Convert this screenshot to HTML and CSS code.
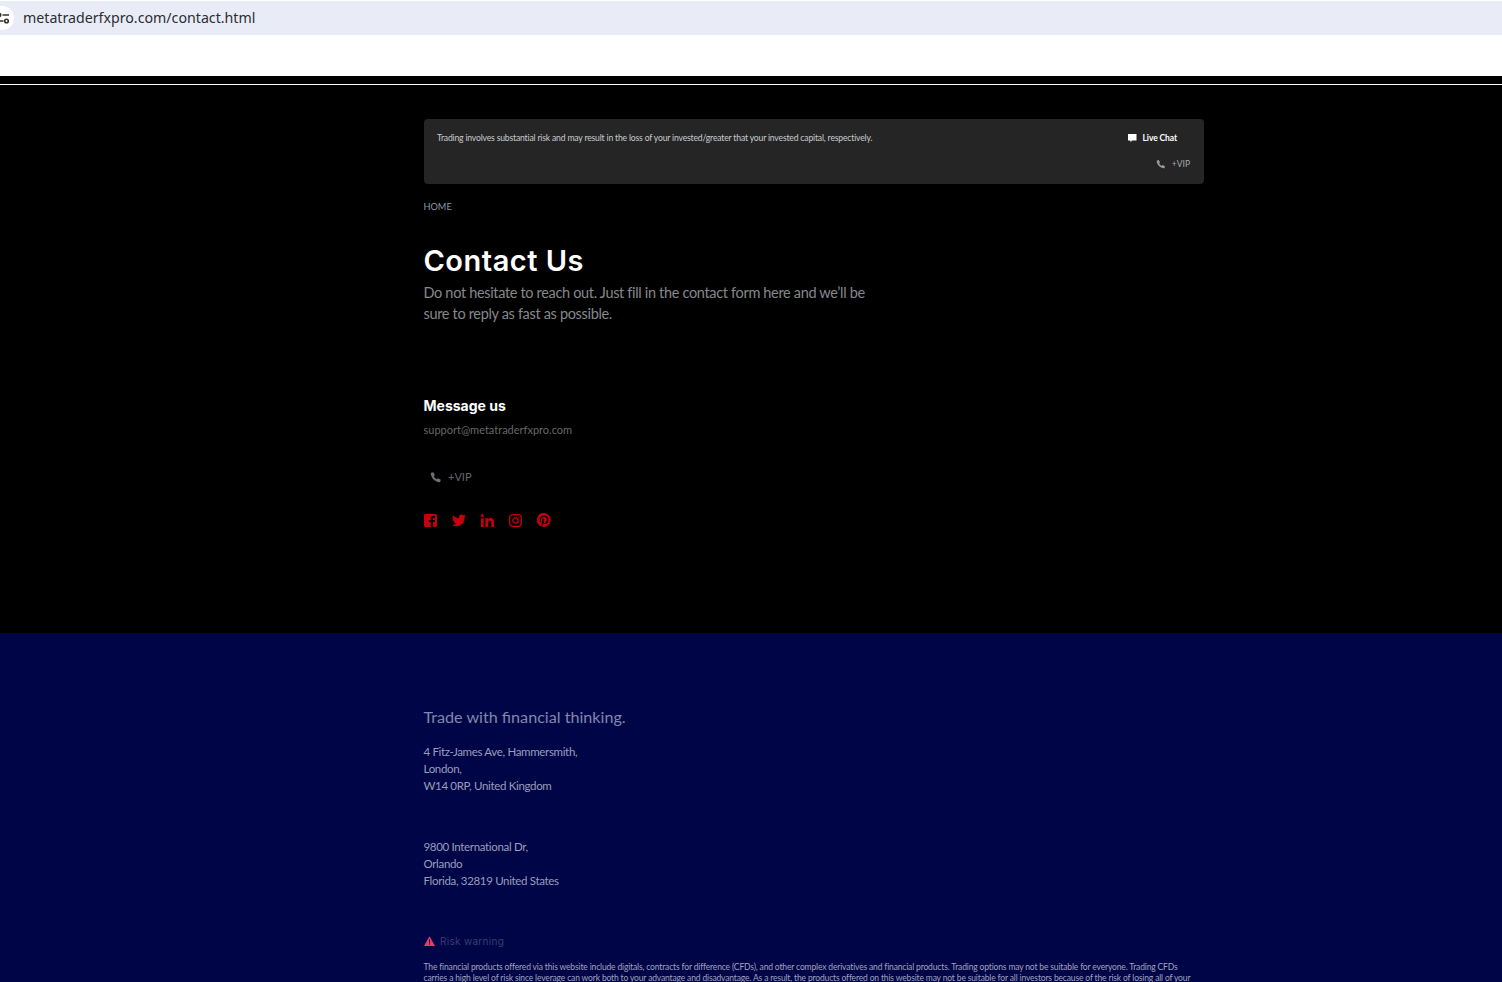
FILE: index.html
```html
<!DOCTYPE html>
<html lang="en">
<head>
<meta charset="utf-8">
<title>Contact Us</title>
<link rel="stylesheet" href="styles.css">
</head>
<body>
<div class="urlbar">
  <span class="site-info">
    <svg width="14" height="14" viewBox="0 0 14 14" class="tune"><circle cx="3" cy="4" r="1.8" fill="#333" stroke="#333" stroke-width="1.4"/><path d="M6.5 4H13M1 10h6.5" stroke="#333" stroke-width="1.7" fill="none"/><circle cx="10.500" cy="10" r="1.800" fill="none" stroke="#333" stroke-width="1.6"/></svg>
  </span>
  <span class="url">metatraderfxpro.com/contact.html</span>
</div>
<div class="whitebar"></div>
<header class="topstrip"></header>
<main class="main">
  <div class="wrap">
    <section class="notice">
      <p class="notice-text">Trading involves substantial risk and may result in the loss of your invested/greater that your invested capital, respectively.</p>
      <div class="notice-links">
        <a class="chat"><svg width="10" height="10" viewBox="0 0 10 10"><path d="M1 1h8.500v6.500H5L3.500 9.200V7.500H1z" fill="#fff"/></svg>Live Chat</a>
        <a class="vip-small"><svg width="10" height="10" viewBox="0 0 24 24"><path d="M6.600 2.500l3 5.500-2 2.500c1.200 2.600 3.300 4.700 5.900 5.900l2.500-2 5.500 3-1 4c-.2.700-.8 1.100-1.500 1C9.800 21.500 2.500 14.200 1.600 5c0-.7.300-1.300 1-1.500z" fill="#9a9a9a"/></svg>+VIP</a>
      </div>
    </section>
    <nav class="crumb">HOME</nav>
    <h1 class="title">Contact Us</h1>
    <p class="lead">Do not hesitate to reach out. Just fill in the contact form here and we’ll be sure to reply as fast as possible.</p>
    <h2 class="msg">Message us</h2>
    <p class="mail">support@metatraderfxpro.com</p>
    <p class="vip"><svg width="12" height="12" viewBox="0 0 24 24"><path d="M6.600 2.500l3 5.500-2 2.500c1.200 2.600 3.300 4.700 5.900 5.900l2.500-2 5.500 3-1 4c-.2.700-.8 1.100-1.500 1C9.800 21.500 2.500 14.200 1.600 5c0-.7.300-1.300 1-1.500z" fill="#6e7276"/></svg>+VIP</p>
    <div class="social">
      <svg width="13" height="13" viewBox="0 0 14 14"><path d="M1.500 0h11A1.500 1.500 0 0 1 14 1.500v11a1.500 1.500 0 0 1-1.500 1.500H9.700V8.700h2l.3-2.300H9.700V5.100c0-.7.300-1.100 1.100-1.100H12V2c-.4-.1-1-.1-1.600-.1-1.900 0-3.100 1.100-3.100 3v1.500H5.300v2.300h2V14H1.500A1.500 1.500 0 0 1 0 12.500v-11A1.500 1.500 0 0 1 1.500 0z" fill="#c4000c"/></svg>
      <svg width="14" height="13" viewBox="0 0 24 22"><path d="M24 3.100c-.9.400-1.800.7-2.800.8 1-.6 1.800-1.600 2.200-2.700-1 .6-2 1-3.100 1.200A4.900 4.900 0 0 0 11.900 7C7.800 6.800 4.200 4.800 1.700 1.900.4 4.100 1 7 3.200 8.400c-.8 0-1.600-.2-2.200-.6 0 2.300 1.600 4.400 3.900 4.900-.7.200-1.500.2-2.200.1.600 2 2.400 3.400 4.600 3.400A9.900 9.900 0 0 1 0 18.700 14 14 0 0 0 21.500 6.200c1-.7 1.900-1.700 2.500-3.100z" fill="#c4000c"/></svg>
      <svg width="13" height="13" viewBox="0 0 14 14"><path d="M0 4.600h2.900V14H0zM1.450 0a1.650 1.650 0 1 1 0 3.300 1.650 1.650 0 0 1 0-3.300zM4.700 4.600h2.800v1.300c.4-.8 1.400-1.500 2.800-1.500 3 0 3.700 1.900 3.700 4.500V14h-2.900V9.400c0-1.100 0-2.500-1.500-2.500s-1.800 1.200-1.800 2.400V14H4.700z" fill="#c4000c"/></svg>
      <svg width="13" height="13" viewBox="0 0 14 14" fill="none" stroke="#c4000c"><rect x=".7" y=".7" width="12.600" height="12.600" rx="3.500" stroke-width="1.400"/><circle cx="7" cy="7" r="2.900" stroke-width="1.400"/><circle cx="10.600" cy="3.400" r=".8" fill="#c4000c" stroke="none"/></svg>
      <svg width="14" height="14" viewBox="0 0 24 24"><path d="M12 0a12 12 0 0 0-4.400 23.200c-.1-1-.2-2.400 0-3.400l1.400-6s-.4-.7-.4-1.800c0-1.700 1-2.900 2.200-2.900 1 0 1.500.8 1.500 1.700 0 1-.7 2.600-1 4-.3 1.200.6 2.200 1.800 2.200 2.100 0 3.800-2.300 3.800-5.500 0-2.900-2.100-4.900-5-4.900-3.400 0-5.400 2.500-5.400 5.200 0 1 .4 2.100.9 2.700.1.100.1.200.1.300l-.3 1.400c-.1.200-.2.300-.4.200-1.500-.7-2.400-2.900-2.400-4.700 0-3.800 2.800-7.300 8-7.300 4.200 0 7.500 3 7.500 7 0 4.200-2.600 7.500-6.300 7.500-1.200 0-2.400-.6-2.800-1.400l-.8 2.900c-.3 1.100-1 2.400-1.500 3.200A12 12 0 1 0 12 0z" fill="#c4000c"/></svg>
    </div>
  </div>
</main>
<footer class="footer">
  <div class="wrap">
    <p class="tag">Trade with financial thinking.</p>
    <address class="addr first">4 Fitz-James Ave, Hammersmith,<br>London,<br>W14 0RP, United Kingdom</address>
    <address class="addr second">9800 International Dr,<br>Orlando<br>Florida, 32819 United States</address>
    <p class="risk"><svg width="11" height="10" viewBox="0 0 11 10"><path d="M5.500 0.300L11 10H0z" fill="#ea3a68"/><path d="M5 3.500h1v3.300H5zM5 7.600h1v1H5z" fill="#000548"/></svg>Risk warning</p>
    <p class="legal">The financial products offered via this website include digitals, contracts for difference (CFDs), and other complex derivatives and financial products. Trading options may not be suitable for everyone. Trading CFDs carries a high level of risk since leverage can work both to your advantage and disadvantage. As a result, the products offered on this website may not be suitable for all investors because of the risk of losing all of your invested capital.</p>
  </div>
</footer>
</body>
</html>
```
FILE: styles.css
```css
* { box-sizing: border-box; }
html, body { margin: 0; height: 982px; overflow: hidden; background: #fff; }
body { font-family: Lato, "Open Sans", sans-serif; }
p, h1, h2, address { margin: 0; font-style: normal; }
svg { display: block; flex: none; }

.urlbar { height: 34px; margin-top: 1px; background: #e9ecf6; display: flex; align-items: center; }
.site-info { width: 14px; height: 24px; border-radius: 0 12px 12px 0; background: #fff; display: flex; align-items: center; justify-content: flex-end; padding-right: 4px; flex: none; overflow: hidden; }
.url { margin-left: 9px; font: 14.200px/1 "Noto Sans", "Open Sans", sans-serif; color: #2b2d33; }
.whitebar { height: 41px; background: #fff; }
.topstrip { height: 9px; background: #000; border-bottom: 1px solid #fff; }

.wrap { width: 780px; margin-left: 424px; }
.main { height: 548px; background: #000; padding-top: 34px; }
.notice { height: 65px; background: #252525; border-radius: 4px; padding: 12px 14px 0 13px; display: flex; justify-content: space-between; }
.notice-text { font-size: 8.600px; line-height: 14px; color: #c8ccd0; letter-spacing: -.17px; }
.notice-links { display: flex; flex-direction: column; align-items: flex-end; gap: 12px; font-size: 8.500px; line-height: 14px; }
.chat { display: flex; align-items: center; gap: 6px; color: #fff; font-weight: 700; margin-right: 13px; letter-spacing: -.1px; }
.vip-small { display: flex; align-items: center; gap: 6px; color: #a8aaac; }
.crumb { margin: 16px 0 0 -.5px; font-size: 9.200px; line-height: 14px; color: #8d99a6; }
.title { margin: 28px 0 0 -.5px; font: 600 29px/38px Inter, sans-serif; letter-spacing: .5px; color: #fff; }
.lead { margin: 2px 0 0 -.5px; width: 460px; font-size: 14.500px; line-height: 21px; letter-spacing: -.33px; color: #85888c; }
.msg { margin: 72px 0 0 -.5px; font: 700 14px/20px Inter, sans-serif; color: #fff; }
.mail { margin: 6px 0 0 -.5px; font-size: 11px; line-height: 16px; color: #66686a; }
.vip { margin: 31px 0 0 6px; display: flex; align-items: center; gap: 6px; font-size: 11px; line-height: 16px; color: #66686a; }
.social { margin-top: 28px; display: flex; align-items: center; gap: 15px; }

.footer { height: 349px; background: #000548; padding-top: 74px; overflow: hidden; }
.tag { margin-left: -.5px; font-size: 16.150px; line-height: 20px; color: #8287ab; }
.addr { margin-left: -.5px; font-size: 11.500px; line-height: 17px; color: #9a9db8; letter-spacing: -.33px; }
.first { margin-top: 16px; }
.second { margin-top: 44px; }
.risk { margin-top: 45px; display: flex; align-items: center; gap: 5px; font: 10px/14px Inter, sans-serif; letter-spacing: .3px; color: #3b3d6c; }
.legal { margin: 14px 0 0 -.5px; width: 772px; font-size: 8.500px; line-height: 11px; color: #a0a3bd; letter-spacing: -.15px; }
```
